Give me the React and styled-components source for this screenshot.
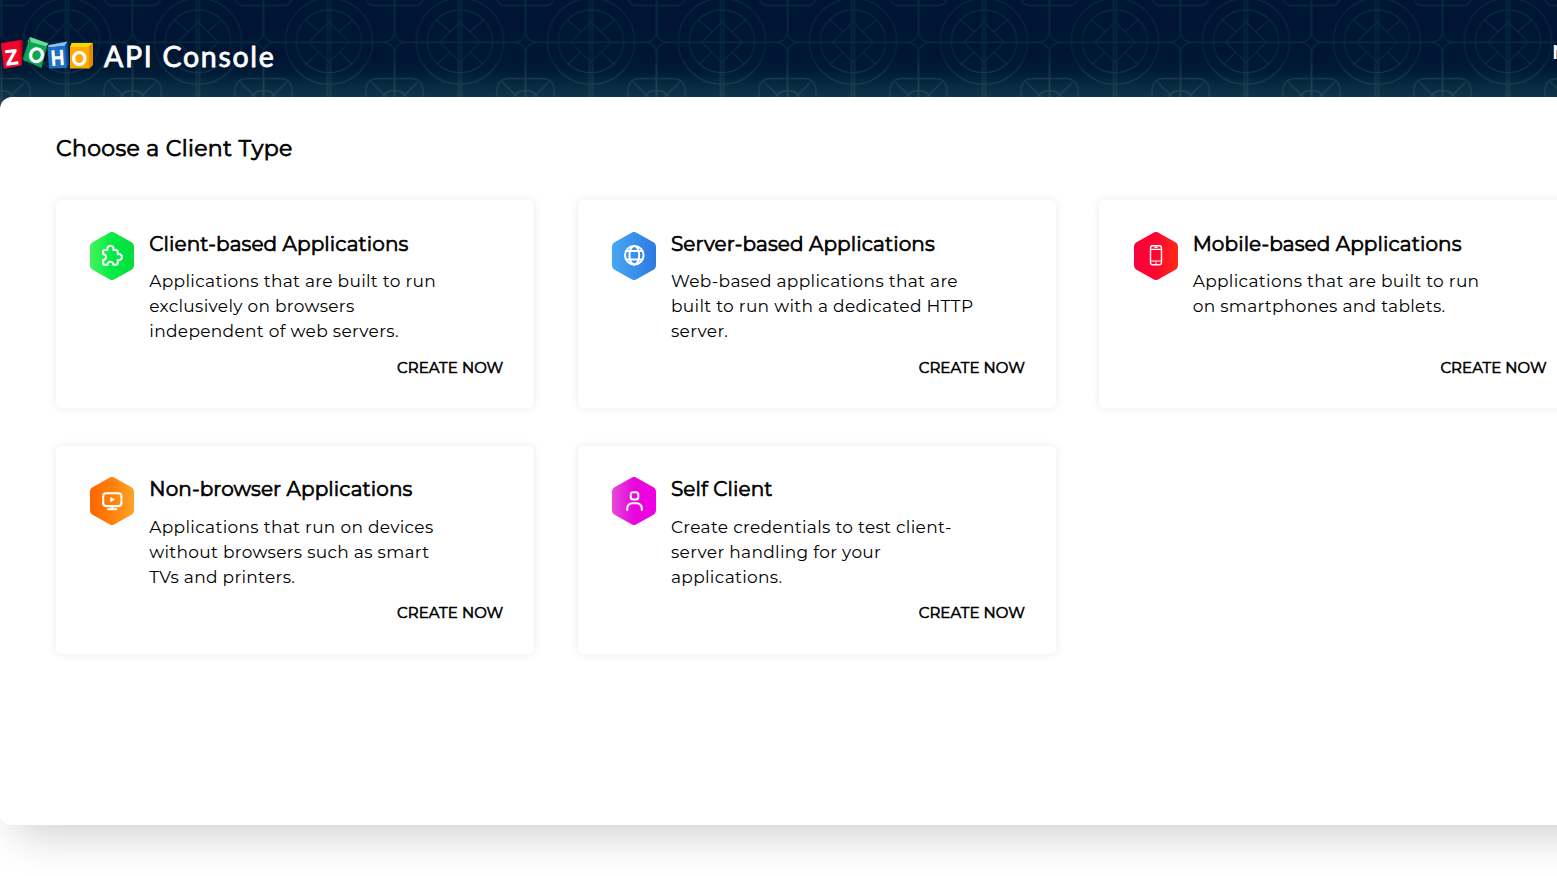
import React from 'react';
import styled, { createGlobalStyle } from 'styled-components';

const GlobalStyle = createGlobalStyle`
  html, body { margin: 0; background: #fff; overflow: hidden; }
  body { font-family: Montserrat, Inter, sans-serif; color: #000; }
`;

const Page = styled.div`
  display: grid;
  grid-template-columns: 1557px;
  grid-template-rows: 97px 728px;
  width: 1557px;
  height: 876px;
  overflow: hidden;
`;

const Header = styled.header`
  position: relative;
  height: 111px;
  background: linear-gradient(#001533 0, #001533 55px, #001b36 72px, #052a41 84px, #0f344a 97px);
`;

const Backdrop = styled.svg`
  position: absolute;
  inset: 0;
  width: 100%;
  height: 100%;
`;

const Bar = styled.div`
  position: relative;
  display: flex;
  align-items: center;
  height: 37px;
  padding-top: 36px;
`;

const Brand = styled.span`
  margin: 3px 0 0 9px;
  font: 400 28.5px/37px Lato, sans-serif;
  letter-spacing: 1.7px;
  -webkit-text-stroke: 0.8px #fff;
  color: #fff;
  white-space: nowrap;
`;

const NavItem = styled.a`
  width: 5px;
  margin: -5px 0 0 auto;
  font: 600 20px/24px Montserrat, Inter, sans-serif;
  color: #fff;
  white-space: nowrap;
`;

const Panel = styled.main`
  position: relative;
  width: 1700px;
  box-sizing: border-box;
  padding: 36px 56px 0;
  border-radius: 12px;
  background: #fff;
  box-shadow: 0 26px 40px -16px rgba(0, 0, 0, 0.19);
`;

const Heading = styled.h1`
  margin: 0 0 35px;
  font-size: 22px;
  line-height: 32px;
  font-weight: 400;
  -webkit-text-stroke: 0.75px #000;
  letter-spacing: 0.35px;
  white-space: nowrap;
`;

const Grid = styled.div`
  display: grid;
  grid-template-columns: repeat(3, 478.25px);
  grid-auto-rows: 208px;
  gap: 37.5px 43.45px;
`;

const Card = styled.section`
  display: grid;
  grid-template-columns: 44px 1fr;
  column-gap: 14.9px;
  box-sizing: border-box;
  padding: 28.7px 31px 0 34.4px;
  border-radius: 5px;
  background: #fff;
  box-shadow: 0 0 10px rgba(0, 0, 0, 0.08);
`;

const Badge = styled.svg`
  width: 44px;
  height: 48px;
  margin-top: 3px;
`;

const Copy = styled.div`
  display: flex;
  flex-direction: column;
`;

const Title = styled.h2`
  margin: 0 0 10.5px;
  font-size: 20px;
  line-height: 30px;
  font-weight: 400;
  -webkit-text-stroke: 0.7px #000;
  letter-spacing: 0.1px;
  white-space: nowrap;
`;

const Description = styled.p`
  margin: 0;
  height: 75px;
  font-size: 17px;
  line-height: 25px;
  letter-spacing: 0.31px;
`;

const Line = styled.span`
  display: block;
  white-space: nowrap;
`;

const Create = styled.a`
  align-self: flex-end;
  margin-top: 12.4px;
  font-size: 15px;
  line-height: 22px;
  font-weight: 400;
  letter-spacing: 0.08px;
  -webkit-text-stroke: 0.6px #000;
`;

const glyphs = {
  puzzle: (
    <path d="M14.600 18h2.900a3.100 3.100 0 1 1 5.800 0h2.900a1.500 1.500 0 0 1 1.500 1.500v2.700a3.100 3.100 0 1 1 0 5.800v3.200a1.500 1.500 0 0 1-1.500 1.500h-2.900a2.900 2.900 0 1 0-5.800 0h-2.900a1.500 1.500 0 0 1-1.500-1.500V28a2.900 2.900 0 1 0 0-5.800v-2.700a1.500 1.500 0 0 1 1.500-1.500z" />
  ),
  globe: (
    <>
      <circle cx="22.300" cy="23.200" r="9.300" />
      <ellipse cx="22.300" cy="23.200" rx="4.900" ry="9.300" />
      <path d="M14.200 18.900h16.200M14.200 27.500h16.200" />
    </>
  ),
  phone: (
    <g strokeWidth="1.400">
      <rect x="16.500" y="13.700" width="11" height="19" rx="2.300" />
      <path d="M17 17.300h10M17 29h10M20.800 15.300h2.400M21.500 31h1" strokeWidth="1.200" />
    </g>
  ),
  screen: (
    <>
      <rect x="13.200" y="16.200" width="18.200" height="12.900" rx="3" />
      <path d="M22.300 29.500v2.500M18.300 32.200h8" />
      <path d="M20.300 20l4.600 2.600-4.600 2.600z" fill="#fff" stroke="none" />
    </>
  ),
  person: (
    <>
      <rect x="18.700" y="15.300" width="7.600" height="7.200" rx="2.500" />
      <path d="M15.200 33v-1.700a5 5 0 0 1 5-5h4.600a5 5 0 0 1 5 5V33" />
    </>
  ),
};

const cards = [
  { id: 'client', glyph: 'puzzle', colors: ['#48f35c', '#02ec45', '#00dd3d'], title: 'Client-based Applications',
    lines: ['Applications that are built to run', 'exclusively on browsers', 'independent of web servers.'] },
  { id: 'server', glyph: 'globe', colors: ['#47a8f2', '#3c91ec', '#2c78e0'], title: 'Server-based Applications',
    lines: ['Web-based applications that are', 'built to run with a dedicated HTTP', 'server.'] },
  { id: 'mobile', glyph: 'phone', colors: ['#fb003d', '#fd0630', '#ff2b16'], title: 'Mobile-based Applications',
    lines: ['Applications that are built to run', 'on smartphones and tablets.'] },
  { id: 'device', glyph: 'screen', colors: ['#ff6500', '#ff8109', '#ffa329'], title: 'Non-browser Applications',
    lines: ['Applications that run on devices', 'without browsers such as smart', 'TVs and printers.'] },
  { id: 'self', glyph: 'person', colors: ['#e44bd8', '#e806dc', '#f000e4'], title: 'Self Client',
    lines: ['Create credentials to test client-', 'server handling for your', 'applications.'] },
];

function HexIcon({ id, glyph, colors }) {
  return (
    <Badge viewBox="0 0 44 48">
      <defs>
        <linearGradient id={id}>
          <stop offset="0" stopColor={colors[0]} />
          <stop offset="0.5" stopColor={colors[1]} />
          <stop offset="1" stopColor={colors[2]} />
        </linearGradient>
      </defs>
      <path fill={`url(#${id})`} d="M19.500.7a5 5 0 0 1 5 0L41.500 10.300a5 5 0 0 1 2.500 4.300v18.800a5 5 0 0 1-2.500 4.300L24.500 47.300a5 5 0 0 1-5 0L2.500 37.700A5 5 0 0 1 0 33.400V14.600a5 5 0 0 1 2.500-4.300z" />
      <g fill="none" stroke="#fff" strokeWidth="2.050" strokeLinejoin="round" strokeLinecap="round">{glyphs[glyph]}</g>
    </Badge>
  );
}

function Pattern() {
  return (
    <Backdrop>
      <defs>
        <linearGradient id="strokeFade" gradientUnits="userSpaceOnUse" x1="0" y1="0" x2="0" y2="97">
          <stop offset="0.6" stopColor="#06293f" />
          <stop offset="1" stopColor="#2b4557" />
        </linearGradient>
        <pattern id="tiles" width="131" height="111" patternUnits="userSpaceOnUse" x="1.500">
          <g fill="none" stroke="url(#strokeFade)" strokeWidth="1.300">
            <ellipse cx="65.500" cy="41.300" rx="43.700" ry="43" />
            <ellipse cx="65.500" cy="41.300" rx="32.700" ry="31.300" />
            <path d="M45.200 42.300L65.500 22l20.300 20.300-20.300 20z" />
            <path d="M41.800 19.500l13.500 12M89.200 19.500l-13.500 12M42.300 64.500l12.700-12M88.700 64.500l-12.700-12" />
            <path d="M64.100 0v111M66.900 0v111" strokeWidth="1.500" />
            <rect x="10" y="41.500" width="111" height="1.600" fill="#06293f" stroke="none" />
            <path d="M0 0v32M0 53v58M131 0v32M131 53v58" strokeWidth="2" />
            <path d="M0 32Q1 41.300 11 42.300Q1 43.300 0 53M131 32Q130 41.300 120 42.300Q130 43.300 131 53" />
            <path d="M0 5.500h20q6 0 8-5.500M131 5.500h-20q-6 0-8-5.500" />
            <path d="M0 78.500h16q12 0 12.600 12v20M131 78.500h-16q-12 0-12.600 12v20M23.500 82L8 97M107.500 82L123 97" />
            <path d="M0 90.500q9 0 13 8M131 90.500q-9 0-13 8" strokeWidth="1.600" />
          </g>
        </pattern>
      </defs>
      <rect width="100%" height="100%" fill="url(#tiles)" />
    </Backdrop>
  );
}

function Logo() {
  return (
    <svg width="95" height="37" viewBox="0 36 95 37">
      <path fill="#c9001b" d="M1 43l20.500-3.300 1.200 2.300-.7 23.500-18 3.200z" />
      <path fill="#f0062b" d="M1 43.500l18.500-3 1 25L4 68.500z" />
      <path fill="#6fdc9b" d="M30 37l18.500 6.500-3 4-18-6z" />
      <path fill="#07843f" d="M30 37l-7.500 22 3 3 5-20z" />
      <path fill="#0aa550" d="M28.500 41.500L47 46.500l-5.500 21.500L23.500 60z" />
      <path fill="#8cc0f0" d="M48.500 45l19-3.500L65 46l-17 1.500z" />
      <path fill="#0d4b9b" d="M67.500 41.500l1.300 23L66 68l-1.500-22z" />
      <path fill="#1f6fc4" d="M47.500 47.500L65 46l2 22-18 .5z" />
      <path fill="#ffd600" d="M71.500 43H93l-4 4H70z" />
      <path fill="#e88a00" d="M93 43v22l-4 4V47z" />
      <path fill="#ffa800" d="M70 47h19v21.500H70z" />
      <g fill="#fff" fontFamily="Montserrat, Inter, sans-serif" fontSize="22" fontWeight="700" textAnchor="middle">
        <text transform="translate(12.500 65) rotate(-7) scale(.88 1)">Z</text>
        <text transform="translate(34 62.500) rotate(18) scale(.88 1)">O</text>
        <text transform="translate(58 65.500) rotate(-4) scale(.8 1)">H</text>
        <text transform="translate(79.500 65.500) scale(.85 1)">O</text>
      </g>
    </svg>
  );
}

export default function App() {
  return (
    <>
      <GlobalStyle />
      <Page>
        <Header>
          <Pattern />
          <Bar>
            <Logo />
            <Brand>API Console</Brand>
            <NavItem>New</NavItem>
          </Bar>
        </Header>
        <Panel>
          <Heading>Choose a Client Type</Heading>
          <Grid>
            {cards.map(({ id, glyph, colors, title, lines }) => (
              <Card key={id}>
                <HexIcon id={id} glyph={glyph} colors={colors} />
                <Copy>
                  <Title>{title}</Title>
                  <Description>
                    {lines.map((text) => <Line key={text}>{text}</Line>)}
                  </Description>
                  <Create>CREATE NOW</Create>
                </Copy>
              </Card>
            ))}
          </Grid>
        </Panel>
      </Page>
    </>
  );
}
